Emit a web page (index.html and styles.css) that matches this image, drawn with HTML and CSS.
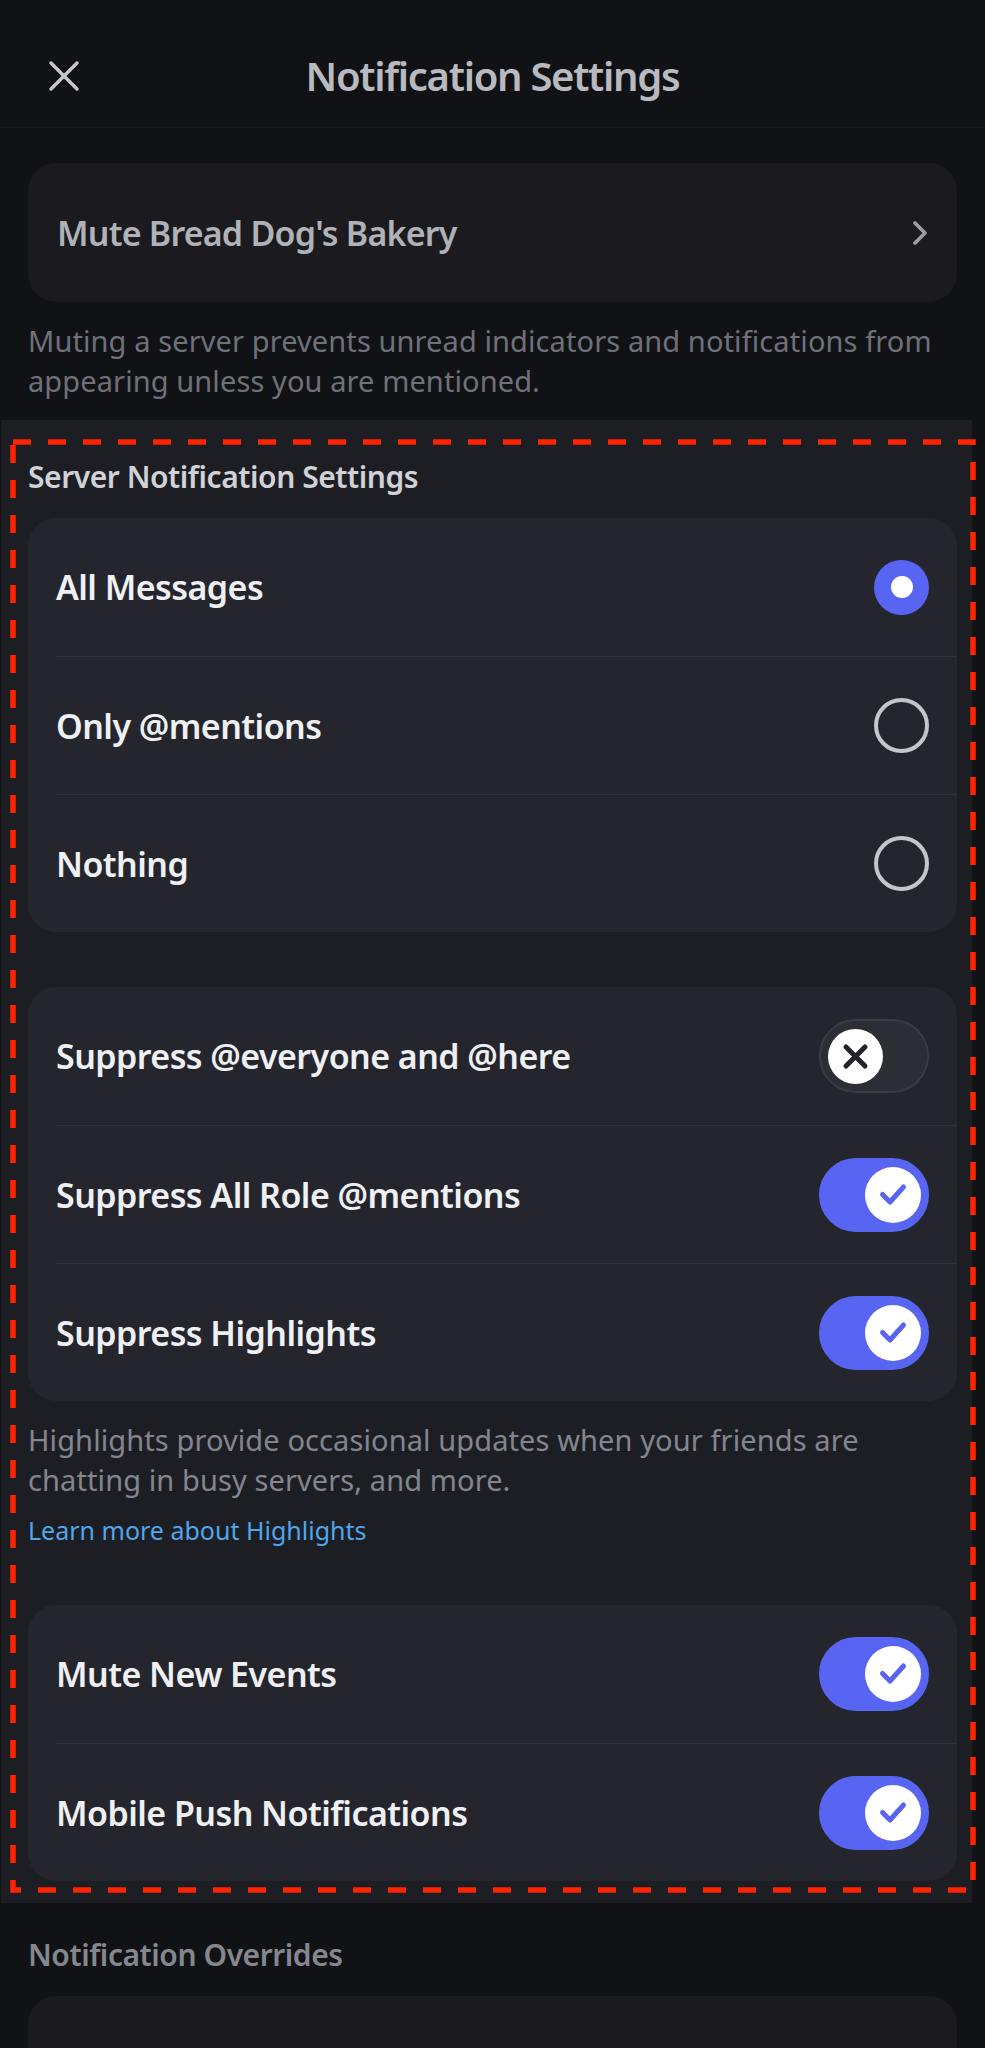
FILE: index.html
```html
<!DOCTYPE html>
<html lang="en">
<head>
    <meta charset="UTF-8">
    <meta name="viewport" content="width=device-width, initial-scale=1.0">
    <title>Notification Settings</title>
    <link rel="stylesheet" href="styles.css">
</head>
<body>
    <header class="topbar">
        <div class="topbar-left">
            <button class="close-btn" aria-label="Close">
                <svg width="32" height="32" viewBox="0 0 32 32"><path d="M3 3 L29 29 M29 3 L3 29" stroke="#c6c8cd" stroke-width="3.4" stroke-linecap="round"/></svg>
            </button>
        </div>
        <h1 class="title">Notification Settings</h1>
        <div></div>
    </header>

    <div class="pad">
        <div class="card mute-card">
            <span>Mute Bread Dog's Bakery</span>
            <svg width="16" height="26" viewBox="0 0 16 26"><path d="M3 3 L13 13 L3 23" fill="none" stroke="#9b9da3" stroke-width="3.8" stroke-linecap="round" stroke-linejoin="round"/></svg>
        </div>
        <p class="hint">Muting a server prevents unread indicators and notifications from appearing unless you are mentioned.</p>
    </div>

    <section class="server-section">
        <h2 class="section-label">Server Notification Settings</h2>
        <div class="group">
            <div class="row"><span>All Messages</span><span class="radio on"></span></div>
            <div class="row"><span>Only @mentions</span><span class="radio"></span></div>
            <div class="row"><span>Nothing</span><span class="radio"></span></div>
        </div>

        <div class="group spaced">
            <div class="row">
                <span>Suppress @everyone and @here</span>
                <span class="toggle">
                    <span class="knob"><svg width="55" height="55" viewBox="0 0 55 55"><path d="M18 18 L37 37 M37 18 L18 37" stroke="#23242a" stroke-width="5" stroke-linecap="round"/></svg></span>
                </span>
            </div>
            <div class="row">
                <span>Suppress All Role @mentions</span>
                <span class="toggle on">
                    <span class="knob"><svg width="56" height="56" viewBox="0 0 56 56"><path d="M17.5 27.5 L25 35 L38.5 20" fill="none" stroke="#5865f2" stroke-width="5" stroke-linecap="round" stroke-linejoin="round"/></svg></span>
                </span>
            </div>
            <div class="row">
                <span>Suppress Highlights</span>
                <span class="toggle on">
                    <span class="knob"><svg width="56" height="56" viewBox="0 0 56 56"><path d="M17.5 27.5 L25 35 L38.5 20" fill="none" stroke="#5865f2" stroke-width="5" stroke-linecap="round" stroke-linejoin="round"/></svg></span>
                </span>
            </div>
        </div>
        <p class="hint bright">Highlights provide occasional updates when your friends are chatting in busy servers, and more.</p>
        <a class="learn-more" href="#">Learn more about Highlights</a>

        <div class="group spaced-lg">
            <div class="row">
                <span>Mute New Events</span>
                <span class="toggle on">
                    <span class="knob"><svg width="56" height="56" viewBox="0 0 56 56"><path d="M17.5 27.5 L25 35 L38.5 20" fill="none" stroke="#5865f2" stroke-width="5" stroke-linecap="round" stroke-linejoin="round"/></svg></span>
                </span>
            </div>
            <div class="row">
                <span>Mobile Push Notifications</span>
                <span class="toggle on">
                    <span class="knob"><svg width="56" height="56" viewBox="0 0 56 56"><path d="M17.5 27.5 L25 35 L38.5 20" fill="none" stroke="#5865f2" stroke-width="5" stroke-linecap="round" stroke-linejoin="round"/></svg></span>
                </span>
            </div>
        </div>

        <svg class="dash-frame" width="966" height="1454" viewBox="0 0 966 1454"><rect x="3" y="3" width="960" height="1448" fill="none" stroke="#ff2400" stroke-width="5.5" stroke-dasharray="18 17"/></svg>
    </section>

    <div class="pad">
        <h2 class="section-label dim">Notification Overrides</h2>
        <div class="card overrides-card"></div>
    </div>
</body>
</html>
```

FILE: styles.css
```css
body {
    margin: 0;
    background: #111215;
    font-family: "Noto Sans", sans-serif;
    overflow: hidden;
}
.topbar {
    height: 103px;
    padding-top: 24px;
    border-bottom: 1px solid #18191d;
    display: grid;
    grid-template-columns: 1fr auto 1fr;
    align-items: center;
}
.topbar-left {
    padding-left: 48px;
}
.close-btn {
    background: none;
    border: none;
    padding: 0;
    width: 32px;
    height: 32px;
    display: block;
}
.close-btn svg {
    display: block;
}
.title {
    margin: 0;
    font-size: 40px;
    line-height: 48px;
    font-weight: 600;
    letter-spacing: -1.3px;
    color: #b8babf;
}
.pad {
    padding: 0 28px;
}
.card {
    background: #1a1a1f;
    border-radius: 28px;
}
.mute-card {
    margin-top: 35px;
    height: 139px;
    padding: 0 29px;
    display: flex;
    align-items: center;
    justify-content: space-between;
    font-size: 34px;
    font-weight: 600;
    letter-spacing: -0.8px;
    color: #b0b2b8;
}
.mute-card svg {
    display: block;
}
.hint {
    margin: 19px 0 0;
    font-size: 29px;
    line-height: 40px;
    letter-spacing: 0.1px;
    color: #6f717a;
}
.hint.bright {
    color: #838690;
}
.server-section {
    position: relative;
    margin: 19px 13px 0 1px;
    padding: 37px 15px 22px 27px;
    background: #1d1e23;
}
.section-label {
    margin: 0 0 21px;
    font-size: 30px;
    line-height: 40px;
    font-weight: 600;
    letter-spacing: -0.45px;
    color: #d0d2d7;
}
.section-label.dim {
    margin-top: 32px;
    color: #85878e;
}
.group {
    background: #25262d;
    border-radius: 28px;
    padding-left: 28px;
}
.group.spaced {
    margin-top: 55px;
}
.group.spaced-lg {
    margin-top: 57px;
}
.row {
    box-sizing: border-box;
    height: 138px;
    padding-right: 28px;
    border-top: 1px solid #32333a;
    display: flex;
    align-items: center;
    justify-content: space-between;
    font-size: 34px;
    font-weight: 600;
    letter-spacing: -0.55px;
    color: #eef0f3;
}
.row:first-child {
    border-top: none;
}
.radio {
    box-sizing: border-box;
    width: 55px;
    height: 55px;
    border-radius: 50%;
    border: 4px solid #c4c6cb;
}
.radio.on {
    border: none;
    background: #5865f2;
    display: flex;
    align-items: center;
    justify-content: center;
}
.radio.on::after {
    content: "";
    width: 22px;
    height: 22px;
    border-radius: 50%;
    background: #fff;
}
.toggle {
    box-sizing: border-box;
    width: 110px;
    height: 74px;
    border-radius: 37px;
    border: 2px solid #3a3b43;
    background: #2d2e35;
    padding: 0 7px;
    display: flex;
    align-items: center;
}
.toggle.on {
    background: #5865f2;
    border-color: #5865f2;
    padding: 0 6px;
    justify-content: flex-end;
}
.knob {
    width: 55px;
    height: 55px;
    border-radius: 50%;
    background: #fff;
}
.toggle.on .knob {
    width: 56px;
    height: 56px;
}
.knob svg {
    display: block;
}
.learn-more {
    display: block;
    margin-top: 12px;
    font-size: 25px;
    line-height: 36px;
    color: #4fa6ec;
    text-decoration: none;
}
.dash-frame {
    position: absolute;
    left: 9px;
    top: 19px;
    pointer-events: none;
}
.overrides-card {
    margin-top: 21px;
    height: 140px;
}
```
